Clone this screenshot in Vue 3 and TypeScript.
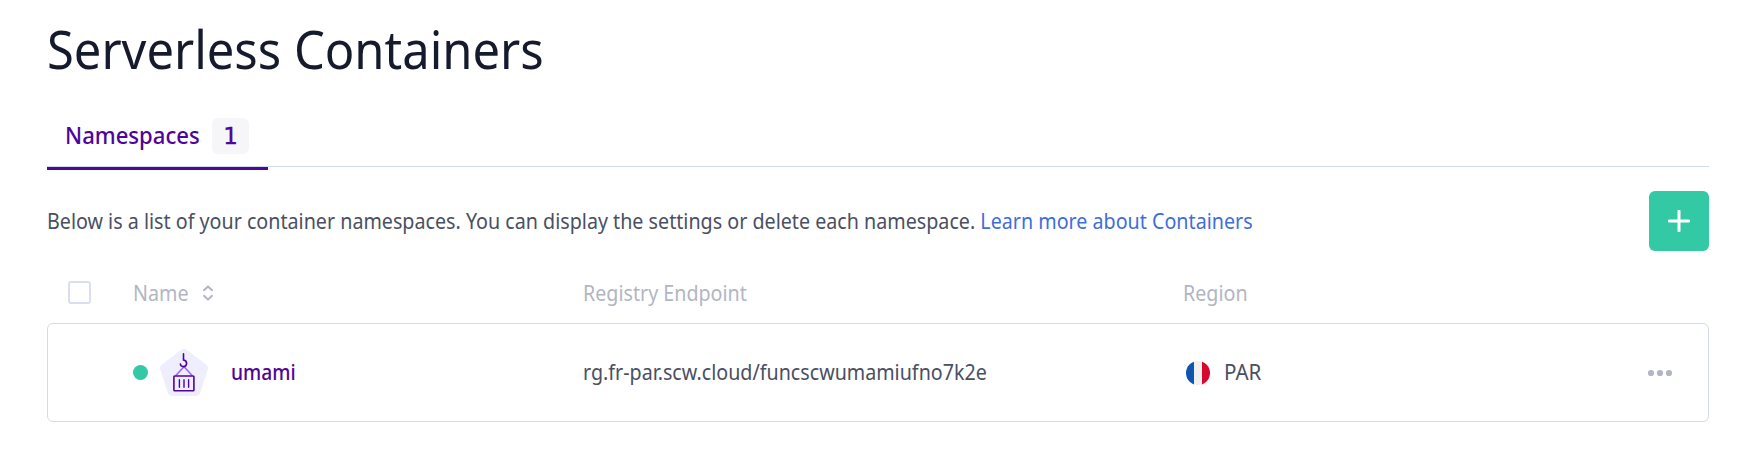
<script setup lang="ts">
interface Namespace {
  name: string
  endpoint: string
  region: string
}

const namespaces: Namespace[] = [
  { name: 'umami', endpoint: 'rg.fr-par.scw.cloud/funcscwumamiufno7k2e', region: 'PAR' },
]
</script>

<template>
  <main class="page">
    <h1 class="title"><span class="narrow">Serverless Containers</span></h1>

    <nav class="tabs">
      <a class="tab">
        <span class="tab-label"><span class="narrow tab-text">Namespaces</span></span>
        <span class="badge">{{ namespaces.length }}</span>
      </a>
    </nav>

    <section class="intro">
      <p class="description">
        <span class="narrow">Below is a list of your container namespaces. You can display the settings or delete each namespace. <a class="link">Learn more about Containers</a></span>
      </p>
      <button class="add" aria-label="Create namespace">
        <svg width="22" height="22" viewBox="0 0 22 22"><path d="M11 1.200v19.600M1.200 11h19.600" stroke="#fff" stroke-width="3" stroke-linecap="round" /></svg>
      </button>
    </section>

    <div class="grid header">
      <span class="check"></span>
      <span class="name-head">
        <span class="name-label"><span class="narrow">Name</span></span>
        <svg width="12" height="16" viewBox="0 0 12 16" fill="none" stroke="#b2b6c3" stroke-width="2" stroke-linecap="round" stroke-linejoin="round"><path d="M2 5.200 6 1.400l4 3.800M2 10.800l4 3.800 4-3.800" /></svg>
      </span>
      <span><span class="narrow">Registry Endpoint</span></span>
      <span><span class="narrow">Region</span></span>
    </div>

    <div v-for="ns in namespaces" :key="ns.name" class="grid row">
      <span></span>
      <span class="name-cell">
        <i class="status"></i>
        <svg class="logo" width="50" height="50" viewBox="0 0 50 50" fill="none">
          <path d="M25 5.500 44.500 20 37 43.500H13L5.500 20Z" fill="#eeeeff" stroke="#eeeeff" stroke-width="9" stroke-linejoin="round" />
          <path d="m16.800 27.500 8.200-8.800 8.200 8.800" stroke="#a365f6" stroke-width="1.500" />
          <path d="M24.500 5.900v6.100c4.700 1 3.600 6.600-.1 6.600-1.700 0-2.800-.9-3-2.600" stroke="#4f0599" stroke-width="1.600" stroke-linecap="round" />
          <rect x="14.900" y="28" width="20" height="14.800" rx=".8" stroke="#4f0599" stroke-width="1.600" />
          <path d="M20.400 31.800v7.400M25 31.800v7.400M29.600 31.800v7.400" stroke="#4f0599" stroke-width="1.400" stroke-linecap="round" />
        </svg>
        <a class="name narrow">{{ ns.name }}</a>
      </span>
      <span class="endpoint"><span class="narrow">{{ ns.endpoint }}</span></span>
      <span class="region">
        <svg width="24" height="24" viewBox="0 0 24 24">
          <clipPath id="flag"><circle cx="12" cy="12" r="12" /></clipPath>
          <g clip-path="url(#flag)">
            <path d="M0 0h8v24H0z" fill="#0d55b0" />
            <path d="M8 0h8v24H8z" fill="#f0f0f0" />
            <path d="M16 0h8v24h-8z" fill="#d80730" />
          </g>
        </svg>
        <span class="narrow region-code">{{ ns.region }}</span>
      </span>
      <svg class="more" width="26" height="8" viewBox="0 0 26 8" fill="#b2b6c3">
        <circle cx="4" cy="4" r="3.100" /><circle cx="13" cy="4" r="3.100" /><circle cx="22" cy="4" r="3.100" />
      </svg>
    </div>
  </main>
</template>

<style>
body {
  background: #fff;
}
</style>

<style scoped>
.page {
  box-sizing: border-box;
  height: 460px;
  padding: 14px 33px 0 47px;
  overflow: hidden;
  background: #fff;
  color: #4a4f62;
  font-family: "Noto Sans", "Open Sans", sans-serif;
  font-size: 21px;
  line-height: 28px;
}

.narrow {
  display: inline-block;
  transform: scaleX(0.937);
  transform-origin: 0 50%;
  white-space: nowrap;
}

.title {
  margin: 0;
  height: 74px;
  color: #151a2d;
  font-size: 52px;
  font-weight: 400;
  line-height: 70px;
}

.title .narrow {
  transform: scaleX(0.94);
}

.tabs {
  display: flex;
  height: 78px;
  border-bottom: 1px solid #d4dae9;
}

.tab {
  display: flex;
  box-sizing: border-box;
  width: 221px;
  height: 82px;
  padding: 30px 0 0 18px;
  border-bottom: 3px solid #4f0599;
  color: #4f0599;
  font-size: 24px;
  font-weight: 500;
  line-height: 36px;
}

.tab-label {
  width: 147px;
  line-height: 34px;
}

.tab-text {
  transform: scaleX(0.92);
}

.badge {
  width: 37px;
  height: 36px;
  border-radius: 6px;
  background: #f6f6f9;
  font-family: "DejaVu Sans", sans-serif;
  font-size: 23px;
  font-weight: 400;
  text-align: center;
  -webkit-text-stroke: 0.4px #4f0599;
}

.intro {
  display: flex;
  align-items: center;
  justify-content: space-between;
  height: 60px;
  margin-top: 24px;
}

.description {
  margin: 0;
  width: 1300px;
}

.description .narrow {
  transform: scaleX(0.9377);
}

.link {
  color: #3f6ed8;
}

.add {
  display: flex;
  align-items: center;
  justify-content: center;
  width: 60px;
  height: 60px;
  padding: 0;
  border: 0;
  border-radius: 6px;
  background: #32c9a4;
}

.grid {
  display: grid;
  grid-template-columns: 86px 450px 600px 466px 1fr;
  align-items: center;
}

.header {
  height: 72px;
  padding-top: 11px;
  box-sizing: border-box;
  color: #b2b6c3;
}

.check {
  box-sizing: border-box;
  width: 23px;
  height: 23px;
  margin-left: 20.500px;
  border: 2px solid #dadfee;
  border-radius: 3px;
}

.name-head {
  display: flex;
  align-items: center;
}

.name-label {
  width: 69px;
}

.row {
  box-sizing: border-box;
  height: 99px;
  border: 1px solid #d4dae9;
  border-radius: 6px;
  grid-template-columns: 85px 450px 600px 464px 1fr;
}

.name-cell {
  display: flex;
  align-items: center;
}

.status {
  width: 15px;
  height: 15px;
  border-radius: 50%;
  background: #32c9a4;
}

.logo {
  margin: 0 22px 0 11px;
}

.name {
  padding-bottom: 2px;
  color: #4f0599;
  font-weight: 500;
  transform: scaleX(0.915);
}

.endpoint {
  padding-bottom: 2px;
}

.region {
  display: flex;
  align-items: center;
  gap: 14px;
  padding-left: 3px;
}

.region-code {
  padding-bottom: 2px;
  transform: scaleX(0.98);
}

.more {
  display: block;
}
</style>
